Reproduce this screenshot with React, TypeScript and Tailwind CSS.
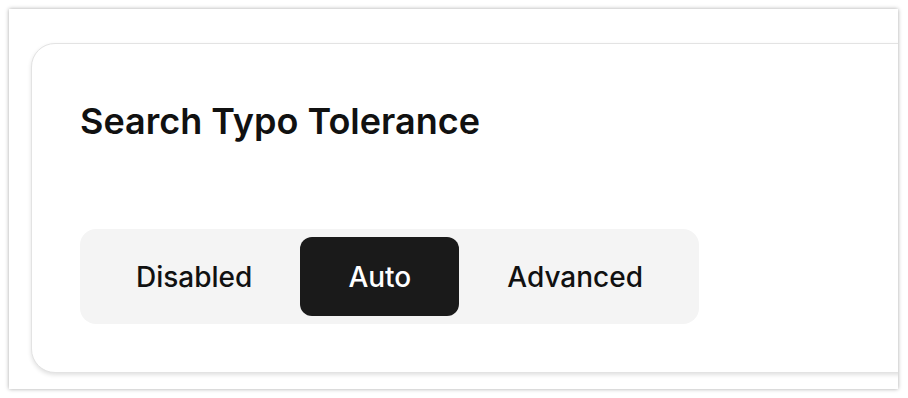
import React, { useState } from "react";

const options = ["Disabled", "Auto", "Advanced"];

export default function App() {
    const [mode, setMode] = useState("Auto");

    return (
        <div className="w-[908px] h-[398px] bg-white p-[9px] pr-[10px]" style={{ fontFamily: "Inter, 'Noto Sans', sans-serif" }}>
            <div className="h-[380px] bg-white overflow-hidden shadow-[0_0_4px_rgba(0,0,0,0.35)] pl-[22px] pt-[34px]">
                <div className="w-[1000px] h-[330px] rounded-[24px] border border-[#e3e3e3] bg-white shadow-[0_2px_4px_rgba(0,0,0,0.12)] px-12 pt-12">
                    <h2 className="text-[36px] leading-[44px] font-semibold text-[#111111] mt-[7px]">
                        Search Typo Tolerance
                    </h2>
                    <div className="mt-[86px] inline-flex p-2 rounded-[16px] bg-[#f4f4f4]">
                        {options.map((opt) => (
                            <button
                                key={opt}
                                onClick={() => setMode(opt)}
                                className={
                                    opt === mode
                                        ? "h-[79px] px-12 rounded-[12px] bg-[#1a1a1a] text-white text-[28px] font-medium"
                                        : "h-[79px] px-12 rounded-[12px] text-[#111111] text-[28px] font-medium"
                                }
                            >
                                {opt}
                            </button>
                        ))}
                    </div>
                </div>
            </div>
        </div>
    );
}
